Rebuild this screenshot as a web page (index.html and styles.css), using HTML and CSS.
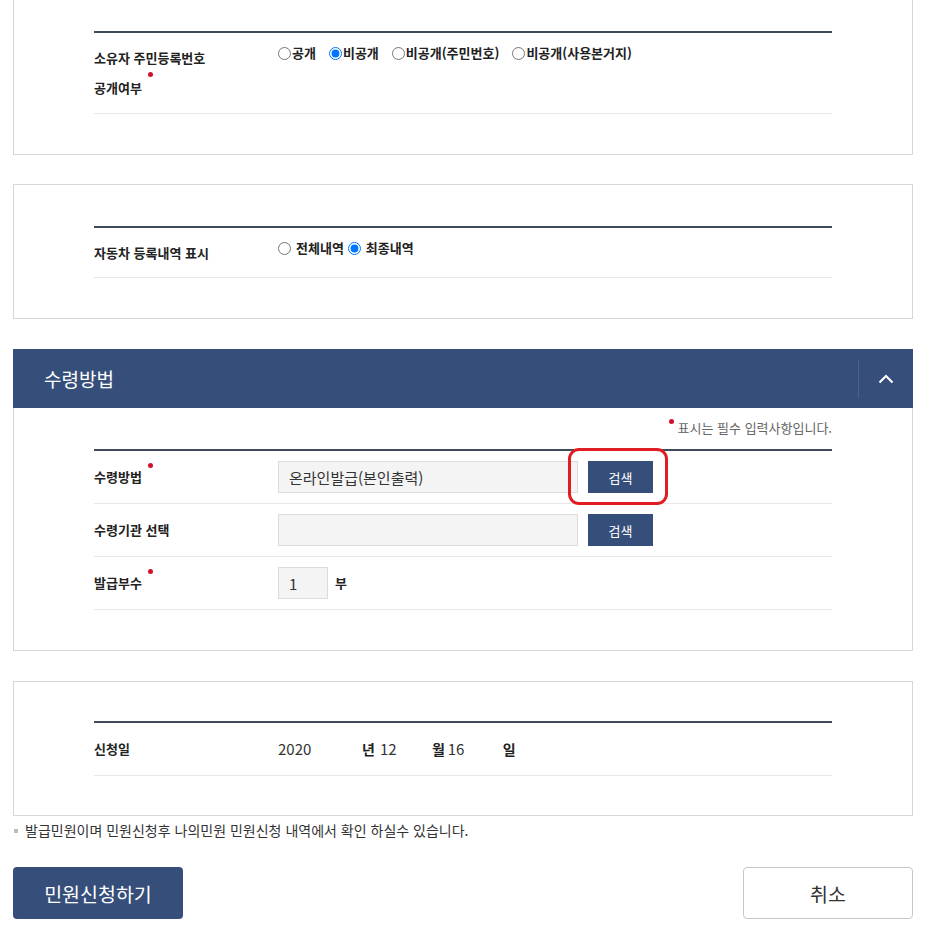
FILE: index.html
```html
<!DOCTYPE html>
<html lang="ko">
<head>
  <meta charset="UTF-8">
  <title>민원신청</title>
  <link rel="stylesheet" href="styles.css">
</head>
<body>
  <div class="wrap">

    <div class="box">
      <div class="form-table">
        <div class="row">
          <div class="label label-tall"><span class="req">소유자 주민등록번호<br>공개여부</span></div>
          <div class="value radios">
            <label><input type="radio" name="open">공개</label>
            <label><input type="radio" name="open" checked>비공개</label>
            <label><input type="radio" name="open">비공개(주민번호)</label>
            <label><input type="radio" name="open">비공개(사용본거지)</label>
          </div>
        </div>
      </div>
    </div>

    <div class="box">
      <div class="form-table">
        <div class="row row-short">
          <div class="label label-tall">자동차 등록내역 표시</div>
          <div class="value radios radios-spaced">
            <label><input type="radio" name="hist">전체내역</label>
            <label><input type="radio" name="hist" checked>최종내역</label>
          </div>
        </div>
      </div>
    </div>

    <div class="section">
      <div class="section-head">
        <h2>수령방법</h2>
        <button class="toggle" type="button" aria-label="접기">
          <svg width="16" height="10" viewBox="0 0 16 10"><path d="M1.5 8.5 L8 2 L14.5 8.5" fill="none" stroke="#fff" stroke-width="2"/></svg>
        </button>
      </div>
      <div class="box box-body">
        <p class="req-note"><span class="dot"></span>표시는 필수 입력사항입니다.</p>
        <div class="form-table">
          <div class="row row-mid">
            <div class="label"><span class="req">수령방법</span></div>
            <div class="value">
              <input class="field" type="text" value="온라인발급(본인출력)" readonly>
              <span class="btn-wrap">
                <button class="btn-search" type="button">검색</button>
                <span class="highlight"></span>
              </span>
            </div>
          </div>
          <div class="row row-mid">
            <div class="label">수령기관 선택</div>
            <div class="value">
              <input class="field" type="text" value="" readonly>
              <span class="btn-wrap">
                <button class="btn-search" type="button">검색</button>
              </span>
            </div>
          </div>
          <div class="row row-mid">
            <div class="label"><span class="req">발급부수</span></div>
            <div class="value">
              <input class="field field-count" type="text" value="1">
              <span class="unit">부</span>
            </div>
          </div>
        </div>
      </div>
    </div>

    <div class="box box-date">
      <div class="form-table">
        <div class="row row-mid row-date">
          <div class="label">신청일</div>
          <div class="value date">
            <span class="year">2020</span>
            <b>년</b><span class="mon">12</span>
            <b>월</b><span class="day">16</span>
            <b>일</b>
          </div>
        </div>
      </div>
    </div>

    <p class="notice">발급민원이며 민원신청후 나의민원 민원신청 내역에서 확인 하실수 있습니다.</p>

    <div class="actions">
      <button class="btn btn-primary" type="button">민원신청하기</button>
      <button class="btn btn-cancel" type="button">취소</button>
    </div>

  </div>
</body>
</html>
```

FILE: styles.css
```css
body {
  margin: 0;
  background: #fff;
  color: #222;
  font-family: "Noto Sans CJK KR", "Noto Sans", sans-serif;
  font-size: 13px;
}
.wrap {
  margin: -11px 13px 0;
}
.box {
  border: 1px solid #d6d6d6;
  padding: 41px 80px 40px;
  margin-bottom: 29px;
}
.form-table {
  border-top: 2px solid #3e4b5b;
}
.row {
  display: flex;
  align-items: flex-start;
  padding: 10px 0;
  border-bottom: 1px solid #e8e8e8;
}
.row-short {
  padding-bottom: 9px;
}
.row-mid {
  align-items: center;
}
.row-date {
  padding: 11px 0;
}
.label {
  width: 184px;
  flex-shrink: 0;
  font-weight: bold;
  line-height: 30px;
}
.req::after {
  content: "";
  display: inline-block;
  width: 5px;
  height: 5px;
  border-radius: 50%;
  background: #d0112b;
  margin-left: 6px;
  vertical-align: top;
  position: relative;
  top: 1px;
}
.label-tall .req::after {
  top: -1px;
}
.value {
  display: flex;
  align-items: center;
  line-height: 20px;
}
.radios label {
  display: inline-flex;
  align-items: center;
  font-weight: bold;
  margin-right: 13px;
}
.radios input {
  margin: 0 1px 0 0;
  width: 13px;
  height: 13px;
}
.radios-spaced label {
  margin-right: 4px;
}
.radios-spaced input {
  margin-right: 5px;
}

.section {
  margin-top: 30px;
}
.section-head {
  display: flex;
  align-items: center;
  height: 59px;
  background: #364f7a;
  color: #fff;
}
.section-head h2 {
  flex: 1;
  margin: 0;
  padding-left: 31px;
  font-size: 19px;
  font-weight: normal;
}
.toggle {
  width: 55px;
  height: 38px;
  border: none;
  border-left: 1px solid #4d6388;
  background: none;
  padding: 0;
  display: flex;
  align-items: center;
  justify-content: center;
}
.box-body {
  border-top: none;
  padding-top: 10px;
}
.req-note {
  margin: 0 0 11px;
  text-align: right;
  color: #666;
  font-size: 13px;
  line-height: 20px;
}
.req-note .dot {
  display: inline-block;
  width: 5px;
  height: 5px;
  border-radius: 50%;
  background: #d0112b;
  margin-right: 4px;
  vertical-align: top;
  position: relative;
  top: 1px;
}
.field {
  box-sizing: border-box;
  width: 300px;
  height: 32px;
  border: 1px solid #dcdcdc;
  background: #f4f4f4;
  padding: 0 10px;
  font-family: inherit;
  font-size: 15px;
  color: #333;
}
.field-count {
  width: 50px;
}
.unit {
  margin-left: 7px;
  font-weight: bold;
}
.btn-wrap {
  position: relative;
  margin-left: 10px;
  display: inline-flex;
}
.btn-search {
  width: 65px;
  height: 32px;
  border: none;
  background: #364f7a;
  color: #fff;
  font-family: inherit;
  font-size: 13px;
}
.highlight {
  position: absolute;
  left: -20px;
  top: -13px;
  width: 100px;
  height: 57px;
  box-sizing: border-box;
  border: 3px solid #e11d24;
  border-radius: 11px;
}

.box-date {
  margin-top: 30px;
  margin-bottom: 0;
  padding-top: 39px;
  padding-bottom: 39px;
}
.date {
  font-size: 15px;
  color: #333;
}
.date b {
  font-size: 14px;
  color: #222;
  margin-right: 3px;
}
.year { width: 84px; }
.mon { width: 52px; padding-left: 2px; }
.day { width: 55px; }

.notice {
  margin: 4px 0 0;
  line-height: 20px;
  font-size: 14px;
  color: #333;
}
.notice::before {
  content: "";
  display: inline-block;
  width: 4px;
  height: 4px;
  background: #bbb;
  margin: 0 7px 0 1px;
  vertical-align: 3px;
}
.actions {
  display: flex;
  justify-content: space-between;
  margin-top: 27px;
}
.btn {
  width: 170px;
  height: 52px;
  border-radius: 4px;
  font-family: inherit;
  font-size: 19.5px;
}
.btn-primary {
  background: #364f7a;
  border: none;
  color: #fff;
}
.btn-cancel {
  background: #fff;
  border: 1px solid #c6c6c6;
  color: #333;
}
```
